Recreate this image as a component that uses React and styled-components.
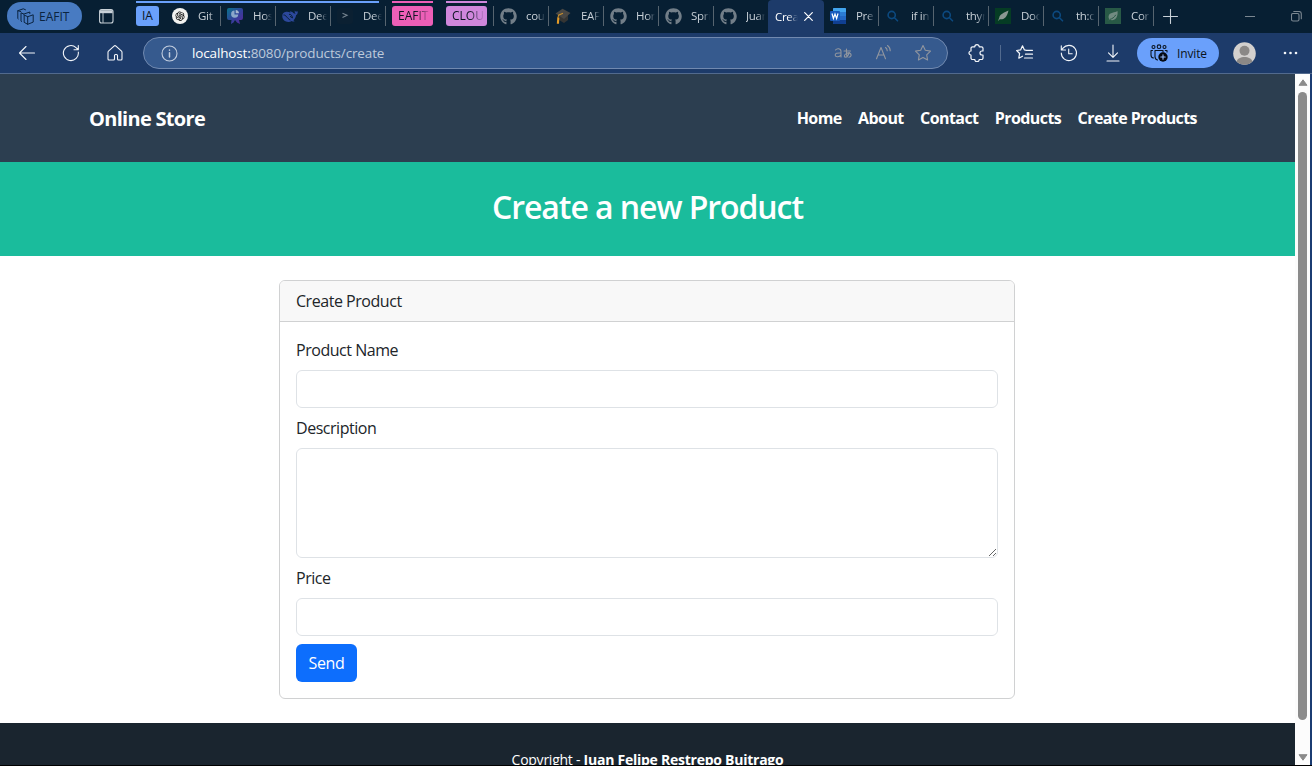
import React from 'react';
import styled, { createGlobalStyle } from 'styled-components';
import { FaGithub } from 'react-icons/fa';
import { AiOutlineOpenAI } from 'react-icons/ai';

const Global = createGlobalStyle`
  * { box-sizing: border-box; }
  body { margin: 0; overflow: hidden; background: #000; }
  body, button, input, textarea { font-family: "Open Sans", "Noto Sans", sans-serif; }
`;

const Window = styled.div`
  width: 1312px;
  height: 766px;
  display: flex;
  flex-direction: column;
  overflow: hidden;
  background: #000;
`;

/* ---------- tab strip ---------- */
const TabStrip = styled.div`
  height: 33px;
  flex: none;
  display: flex;
  background: #071f33;
  font-size: 12px;
  color: #c9d1d8;
  white-space: nowrap;
`;
const Profile = styled.div`
  width: 75px;
  height: 28px;
  margin: 2px 17px 0 7px;
  padding-left: 10px;
  border-radius: 14px;
  background: #487bc2;
  color: #0b2440;
  display: flex;
  align-items: center;
  gap: 5px;
`;
const StripIcon = styled.div`
  display: flex;
  margin: ${(p) => p.$m};
  color: ${(p) => p.$color || '#c9d1d8'};
`;
const TabGroup = styled.div`
  display: flex;
  height: 30px;
  margin: 1px ${(p) => p.$after || 0}px 0 0;
  width: ${(p) => p.$width}px;
  background: linear-gradient(${(p) => p.$color}, ${(p) => p.$color}) 0 0 / ${(p) => p.$line}px 2px no-repeat;
`;
const GroupLabel = styled.div`
  height: 20px;
  width: ${(p) => p.$width}px;
  flex: none;
  margin: 5px 7px 0 0;
  padding: 0 2px 0 6px;
  border-radius: 3px;
  background: ${(p) => p.$color};
  color: #0a1420;
  line-height: 20px;
`;
const Fade = styled.span`
  display: block;
  mask-image: linear-gradient(90deg, #000 50%, rgba(0, 0, 0, 0.1) 95%);
`;
const TabBox = styled.div`
  width: 55px;
  flex: none;
  height: 20px;
  margin-top: ${(p) => p.$top ?? 6}px;
  padding-left: 6px;
  border-right: 1px solid #56646f;
  display: flex;
  align-items: center;
  gap: 10px;
  svg { flex: none; }
`;
const TabTitle = styled(Fade)`
  width: 20px;
  line-height: 20px;
  font-size: 11.5px;
  letter-spacing: -0.3px;
  mask-image: linear-gradient(90deg, #000 55%, transparent 95%);
`;
const Divider = styled.div`
  width: 1px;
  height: 20px;
  margin-top: 6px;
  background: #56646f;
`;
const ActiveTab = styled.div`
  width: 56px;
  height: 33px;
  margin-left: -1px;
  padding-left: 7px;
  background: #1d3b6a;
  border-radius: 4px 4px 0 0;
  color: #fff;
  display: flex;
  align-items: center;
  gap: 5px;
  flex: none;
  position: relative;
`;
const ActiveTitle = styled(TabTitle)`
  width: 24px;
`;

/* ---------- toolbar ---------- */
const Toolbar = styled.div`
  height: 41px;
  flex: none;
  display: flex;
  align-items: center;
  background: #1d3b6a;
  border-bottom: 1px solid #526a8e;
  color: #f3f6fa;
`;
const ToolIcon = styled.div`
  width: ${(p) => p.$w || 20}px;
  height: 20px;
  margin-left: ${(p) => p.$left}px;
  flex: none;
  display: flex;
  align-items: center;
  justify-content: center;
  color: ${(p) => p.$color || 'inherit'};
`;
const Address = styled.div`
  width: 805px;
  height: 32px;
  margin-left: 18px;
  border: 1px solid #7189af;
  border-radius: 16px;
  background: #365a8e;
  display: flex;
  align-items: center;
  flex: none;
`;
const Url = styled.div`
  width: 630px;
  margin-left: 13px;
  font-size: 13.5px;
  letter-spacing: -0.14px;
  color: #bdc9da;
  b { font-weight: 400; color: #fff; }
`;
const ToolRule = styled.div`
  width: 1px;
  height: 16px;
  margin-left: 13px;
  background: #526a8e;
`;
const Invite = styled.div`
  width: 82px;
  height: 30px;
  margin-left: 14px;
  padding-left: 13px;
  border-radius: 15px;
  background: #6aa0fb;
  color: #0a1420;
  font-size: 12px;
  letter-spacing: -0.15px;
  display: flex;
  align-items: center;
  gap: 9px;
  flex: none;
`;

/* ---------- page ---------- */
const Viewport = styled.div`
  height: 691px;
  flex: none;
  display: flex;
  border-right: 2px solid #1b3c72;
`;
const Page = styled.div`
  width: 1295px;
  overflow: hidden;
  background: #fff;
  color: #212529;
  font-size: 16px;
  line-height: 24px;
`;
const Navbar = styled.nav`
  height: 88px;
  padding: 0 98px 0 89px;
  background: #2c3e50;
  color: #fff;
  display: flex;
  align-items: center;
  justify-content: space-between;
  font-weight: 700;
`;
const Brand = styled.div`
  padding-top: 2px;
  font-size: 20px;
  letter-spacing: -0.7px;
`;
const Links = styled.div`
  display: flex;
  gap: 16.4px;
  letter-spacing: -0.58px;
`;
const Masthead = styled.header`
  height: 94px;
  padding-top: 26px;
  background: #1abc9c;
  color: #fff;
  text-align: center;
`;
const Title = styled.h2`
  margin: 0;
  font-size: 32px;
  font-weight: 600;
  line-height: 38px;
  letter-spacing: -1.07px;
`;
const Card = styled.section`
  width: 736px;
  height: 419px;
  margin: 24px 0 24px 279px;
  border: 1px solid #d0d1d2;
  border-radius: 6px;
  overflow: hidden;
  letter-spacing: -0.46px;
`;
const CardHeader = styled.div`
  height: 41px;
  padding: 8px 16px;
  background: #f8f8f8;
  border-bottom: 1px solid #d0d1d2;
`;
const Form = styled.form`
  padding: 16px;
  display: flex;
  flex-direction: column;
  align-items: flex-start;
`;
const Label = styled.label`
  margin-bottom: 8px;
`;
const Field = styled.input`
  display: block;
  width: 702px;
  height: ${(p) => p.$h || 38}px;
  margin: 0 0 8px;
  border: 1px solid #dee2e6;
  border-radius: 6px;
  background: #fff;
  outline: none;
`;
const Send = styled.button`
  width: 61px;
  height: 38px;
  padding: 0;
  border: 0;
  border-radius: 6px;
  background: #0d6efd;
  color: #fff;
  font-size: 16px;
  letter-spacing: -0.4px;
`;
const Footer = styled.footer`
  height: 60px;
  padding-top: 28px;
  background: #1a252f;
  color: #fff;
  text-align: center;
  font-size: 14px;
  line-height: 18px;
  letter-spacing: -0.25px;
  b { font-weight: 700; }
`;
const Scrollbar = styled.div`
  width: 15px;
  background: #fcfcfc;
  display: flex;
  flex-direction: column;
  align-items: center;
  padding: 5px 0 4px;
`;
const Thumb = styled.div`
  width: 9px;
  height: 628px;
  margin: 6px 0 auto;
  border-radius: 5px;
  background: #8b8b8b;
`;

/* ---------- icons ---------- */
const Svg = ({ s = 16, children, ...p }) => (
  <svg width={s} height={s} viewBox={`0 0 ${s} ${s}`} fill="none" stroke="currentColor" strokeWidth="1.1" strokeLinecap="round" strokeLinejoin="round" {...p}>
    {children}
  </svg>
);
const Workspace = () => (
  <Svg s={17} strokeWidth="1">
    <path d="M7.500 7.200l3.200 1.500v7.600l-3.200-1.800zM10.700 8.700l5.500-1.900v7.300l-5.500 2.200" />
    <path d="M4.500 13.500l-.5-.4V4.800l2.800 1.300M6.800 6.100l6-2.100v1.500" />
    <path d="M1.200 10.900l-.4-.3V2.700L3.700 3.500M.8 2.700L6.300.8l2.200 1" />
  </Svg>
);
const TabsIcon = () => (
  <Svg s={15}><rect x=".6" y=".6" width="13.400" height="13.400" rx="2" /><path d="M1 1.200h12.600v3H1z" fill="currentColor" stroke="none" /><path d="M4 4v9.400" strokeWidth=".9" /></Svg>
);
const OpenAi = () => (
  <svg width="16" height="16" viewBox="0 0 16 16"><circle cx="8" cy="8" r="8" fill="#f2f2f0" /><g color="#111"><AiOutlineOpenAI x="2" y="2" size={12} /></g></svg>
);
const Hosting = () => (
  <svg width="16" height="16" viewBox="0 0 16 16">
    <defs><linearGradient id="hostFill" x1="0" y1="0" x2="1" y2="1"><stop offset="0" stopColor="#08738c" /><stop offset=".55" stopColor="#34409c" /><stop offset="1" stopColor="#5a259b" /></linearGradient></defs>
    <path d="M2 0h12a2 2 0 0 1 2 2v8a2 2 0 0 1-2 2h-2l1 4-3-1.500L8 12l-1.500 2.500L4 16l.5-4H2a2 2 0 0 1-2-2V2a2 2 0 0 1 2-2z" fill="url(#hostFill)" />
    <path d="M7.500 2.600A3.600 3.600 0 1 0 11.300 6.500H7.500z" fill="#8ba7ca" /><path d="M8.700 2v3.300H12A3.500 3.500 0 0 0 8.700 2z" fill="#a8b7d0" />
  </svg>
);
const Whale = () => (
  <svg width="16" height="16" viewBox="0 0 16 16"><path d="M15.800 3.200c-1.500.8-2.200.4-3-.8-.3 1.500.1 2.600 1 3.200-1 .5-2.300-.4-3.400-1.600L7.700 3.300l.8 1.400C6 3.100.3 3.200.3 8.200c0 3.500 2.900 5.700 6 5.700 1.400 0 2.500-.3 3.400-.9.900.6 2.200.7 2.900.3l-1.200-1c1.700-1.500 2.500-3.200 2.700-5.300 1-.3 1.800-1.500 1.700-3.800z" fill="#2c489c" /><path d="M1.500 7c2.600-.4 3.800 3.800 6.800 5M7 6.300c1.900-.3 3.400 1.600 3.500 3.600L8 8.300" stroke="#071f33" strokeWidth="1" fill="none" /></svg>
);
const Prompt = () => (
  <svg width="16" height="16" viewBox="0 0 16 16"><rect width="16" height="16" rx="3" fill="#0b2032" /><path d="M5.500 5.200L10 7.200 5.500 9.500" stroke="#74828e" strokeWidth="1.200" fill="none" /></svg>
);
const Cap = () => (
  <svg width="16" height="16" viewBox="0 0 16 16"><path d="M4 7v5l5 3 4-3V7z" fill="#353533" /><path d="M.5 5.500L7.500.8 15.500 5 9 11z" fill="#494845" /><path d="M8 5.300L3.500 7.200 3 10" stroke="#c78f2d" strokeWidth="1.100" fill="none" /><path d="M2.300 9.500l2 .3-.3 6H1.800z" fill="#e49b27" /></svg>
);
const Github = () => <FaGithub size={17} color="#727e88" style={{ margin: '0 -1px 0 0' }} />;
const Word = () => (
  <svg width="16" height="16" viewBox="0 0 16 16"><rect x="3" width="13" height="16" rx="1" fill="#2368c4" /><path d="M3 1a1 1 0 0 1 1-1h11a1 1 0 0 1 1 1v3H3z" fill="#42a5ee" /><path d="M3 4h13v4H3z" fill="#2b7cd3" /><path d="M3 12h13v3a1 1 0 0 1-1 1H4a1 1 0 0 1-1-1z" fill="#103f91" /><rect y="3" width="10" height="10" rx="1" fill="#185abd" /><path d="M2 5.500l1.400 5L5 6l1.600 4.500L8 5.500" stroke="#fff" strokeWidth="1.200" fill="none" /></svg>
);
const Search = () => (
  <svg width="16" height="16" viewBox="0 0 16 16"><g fill="none" stroke="#0c497f" strokeWidth="1.600" strokeLinecap="round"><circle cx="6.700" cy="7" r="3.600" /><path d="M9.500 9.800l3 3" /></g></svg>
);
const LeafDark = () => (
  <svg width="16" height="16" viewBox="0 0 16 16"><path d="M0 0h16v16H0z" fill="#053c24" /><path d="M13.500 2.500C9 4.500 4.500 6.500 4.300 9.600L3 13l1.800-1.700c4 .4 7-1.300 8.700-8.800z" fill="#8a9892" /></svg>
);
const LeafLight = () => (
  <svg width="16" height="16" viewBox="0 0 16 16"><path d="M0 0h16v16H0z" fill="#285946" /><path d="M12.500 3c-2 1.900-8.200.8-8.900 5.300-.2 1 .1 2 .7 2.800L3.500 12.500l1.200-.7c4.700 2 8.700-2.300 7.800-8.800z" fill="#718b81" /><path d="M4.600 11.500c2.700-.8 4.600-2 6.200-4.700" stroke="#285946" fill="none" /></svg>
);

const FirstTabs = [[OpenAi, 'Git'], [Hosting, 'Hos'], [Whale, 'Dee'], [Prompt, 'Dee']];
const MidTabs = [[Github, 'cou'], [Cap, 'EAF'], [Github, 'Hor'], [Github, 'Spri'], [Github, 'Juar']];
const LastTabs = [[Word, 'Pre'], [Search, 'if in'], [Search, 'thyr'], [LeafDark, 'Doc'], [Search, 'th:c'], [LeafLight, 'Cor']];

const Tab = ({ icon: Icon, title, top }) => (
  <TabBox $top={top}><Icon /><TabTitle>{title}</TabTitle></TabBox>
);
const renderTabs = (list, top) => list.map(([icon, title], i) => <Tab key={i} icon={icon} title={title} top={top} />);

export default function App() {
  return (
    <Window>
      <Global />
      <TabStrip>
        <Profile><Workspace />EAFIT</Profile>
        <StripIcon $m="9px 22px 0 0"><TabsIcon /></StripIcon>
        <TabGroup $color="#6aa0fb" $line={243} $width={250} $after={6}>
          <GroupLabel $color="#6aa0fb" $width={23}>IA</GroupLabel>
          {renderTabs(FirstTabs, 5)}
        </TabGroup>
        <TabGroup $color="#ed5fb7" $line={41} $width={41} $after={13}>
          <GroupLabel $color="#ed5fb7" $width={41}><Fade>EAFIT</Fade></GroupLabel>
        </TabGroup>
        <TabGroup $color="#cf87dc" $line={41} $width={41} $after={6}>
          <GroupLabel $color="#cf87dc" $width={41}><Fade>CLOU</Fade></GroupLabel>
        </TabGroup>
        <Divider />
        {renderTabs(MidTabs)}
        <ActiveTab>
          <ActiveTitle>Crea</ActiveTitle>
          <Svg s={9} strokeWidth="1.200"><path d="M.7.700l7.600 7.600M8.300.700L.7 8.300" /></Svg>
        </ActiveTab>
        {renderTabs(LastTabs)}
        <StripIcon $m="9px 0 0 9px"><Svg s={15}><path d="M7.500.5v14M.5 7.500h14" /></Svg></StripIcon>
        <StripIcon $m="11px 0 0 67px" $color="#7b8791"><Svg s={10}><path d="M0 5.500h10" /></Svg></StripIcon>
        <StripIcon $m="11px 0 0 36px" $color="#7b8791"><Svg s={11}><rect x=".5" y="2.500" width="7.500" height="7.500" rx="1.500" /><path d="M2.800.5H8a2.300 2.300 0 0 1 2.300 2.300v5" /></Svg></StripIcon>
      </TabStrip>

      <Toolbar>
        <ToolIcon $left={17}><Svg s={18}><path d="M16.500 9h-15M8 2.500L1.500 9 8 15.500" /></Svg></ToolIcon>
        <ToolIcon $left={24}><Svg s={18}><path d="M16.300 8A7.500 7.500 0 1 1 14 3.600L16 5.500M16.300 1.500v4.300H12" /></Svg></ToolIcon>
        <ToolIcon $left={24}><Svg s={18}><path d="M2 8.200a1.500 1.500 0 0 1 .5-1.100l5.500-5a1.500 1.500 0 0 1 2 0l5.500 5a1.500 1.500 0 0 1 .5 1.100V15a1 1 0 0 1-1 1h-2.500a1 1 0 0 1-1-1v-3.500a1 1 0 0 0-1-1h-1a1 1 0 0 0-1 1V15a1 1 0 0 1-1 1H3a1 1 0 0 1-1-1z" /></Svg></ToolIcon>
        <Address>
          <ToolIcon $left={15} $color="#c3cedf"><Svg s={17}><circle cx="8.500" cy="8.500" r="7.500" /><path d="M8.500 7.800v4.200M8.500 5v.2" strokeWidth="1.500" /></Svg></ToolIcon>
          <Url><b>localhost:</b>8080/products/create</Url>
          <ToolIcon $left={11} $color="#91969f"><Svg s={18}><path d="M1.500 6c1.500-2 5.500-1.700 5.500 1.500V13M7 9c-4-.3-6 .5-5.800 2.300.3 2.200 4.500 2 5.800-.6M10 7h6.500M12.500 5c-.2 4 0 6 .6 8M15.300 8.500c-1 3-3 5-4.600 4.500-1.500-2 3-5 5.300-3.700 2 1.500 1 3.700-1.200 4" /></Svg></ToolIcon>
          <ToolIcon $left={21} $color="#91969f"><Svg s={18}><path d="M1.500 14.800L6 3.500l4.500 11.300M3 11h6M10.500 3.500a4 4 0 0 1 1.700 3.300M12.500 1.500c2 1.400 2.700 3.200 2.700 5.300" /></Svg></ToolIcon>
          <ToolIcon $left={19} $color="#91969f"><Svg s={18}><path d="M9 1.500l2.300 4.800 5.200.8-3.800 3.700.9 5.200L9 13.500 4.400 16l.9-5.200L1.500 7.100l5.200-.8z" /></Svg></ToolIcon>
        </Address>
        <ToolIcon $left={19}><Svg s={18} strokeWidth="1.200"><path d="M4.500 2.800h2.300a2.200 2.200 0 0 1 4.400 0h2.300A1.500 1.500 0 0 1 15 4.300v2.700h-1a2 2 0 0 0 0 4h1v3a1.500 1.500 0 0 1-1.500 1.500h-2.300a2.200 2.200 0 0 1-4.400 0H4.500A1.500 1.500 0 0 1 3 14v-3a2 2 0 0 1 0-4V4.300a1.500 1.500 0 0 1 1.500-1.500z" /></Svg></ToolIcon>
        <ToolRule />
        <ToolIcon $left={14}><Svg s={18} strokeWidth="1.200"><path d="M10.500 6.300L8.300 5.800 6.500 1.800 4.600 5.900l-4 .6 3 3-.8 4.700 3.700-2M10.500 6.300h6M9.500 10.200h7M8.500 14h8" /></Svg></ToolIcon>
        <ToolIcon $left={24}><Svg s={18}><path d="M1.300 9A7.600 7.600 0 1 0 3 4.200L1.500 6M1.300 1.700V6h4.200M8.700 5v4.700h3.500" /></Svg></ToolIcon>
        <ToolIcon $left={24}><Svg s={18}><path d="M9 1v12M4.500 8.800L9 13.300l4.500-4.500M3 17h12" /></Svg></ToolIcon>
        <Invite>
          <Svg s={18}><circle cx="3.500" cy="3" r="1.500" /><circle cx="9" cy="2.700" r="1.800" /><circle cx="14.500" cy="3" r="1.500" /><path d="M3.500 14A3 3 0 0 1 1 11V6.500h1.500M7.500 16A3.500 3.500 0 0 1 5 12.700V6.500h8V8M15.300 6.500H17V8" /><circle cx="13" cy="13" r="4.700" fill="#050a12" stroke="none" /><path d="M10.800 13h4.400M13 10.800v4.400" stroke="#9bc0ff" /></Svg>
          Invite
        </Invite>
        <ToolIcon $left={14} $w={23}>
          <svg width="23" height="23" viewBox="0 0 23 23"><circle cx="11.500" cy="11.500" r="11.300" fill="#d3d0ce" /><circle cx="11.500" cy="8.700" r="5" fill="#8b8886" /><path d="M3.700 19.700C4.500 13.500 18.500 13.500 19.300 19.700A11.300 11.300 0 0 1 3.700 19.700z" fill="#8b8886" /></svg>
        </ToolIcon>
        <ToolIcon $left={24}><Svg s={18} fill="currentColor" stroke="none"><circle cx="4" cy="9" r="1.300" /><circle cx="9.500" cy="9" r="1.300" /><circle cx="15" cy="9" r="1.300" /></Svg></ToolIcon>
      </Toolbar>

      <Viewport>
        <Page>
          <Navbar>
            <Brand>Online Store</Brand>
            <Links>
              <span>Home</span><span>About</span><span>Contact</span><span>Products</span><span>Create Products</span>
            </Links>
          </Navbar>
          <Masthead><Title>Create a new Product</Title></Masthead>
          <Card>
            <CardHeader>Create Product</CardHeader>
            <Form>
              <Label htmlFor="name">Product Name</Label>
              <Field id="name" />
              <Label htmlFor="description">Description</Label>
              <Field as="textarea" id="description" $h={110} />
              <Label htmlFor="price">Price</Label>
              <Field id="price" />
              <Send type="button">Send</Send>
            </Form>
          </Card>
          <Footer>Copyright - <b>Juan Felipe Restrepo Buitrago</b></Footer>
        </Page>
        <Scrollbar>
          <svg width="10" height="7" viewBox="0 0 10 7"><path d="M5 .8L9 6.300H1z" fill="#8b8b8b" stroke="#8b8b8b" strokeLinejoin="round" /></svg>
          <Thumb />
          <svg width="10" height="7" viewBox="0 0 10 7"><path d="M5 6.200L9 .7H1z" fill="#8b8b8b" stroke="#8b8b8b" strokeLinejoin="round" /></svg>
        </Scrollbar>
      </Viewport>
    </Window>
  );
}
